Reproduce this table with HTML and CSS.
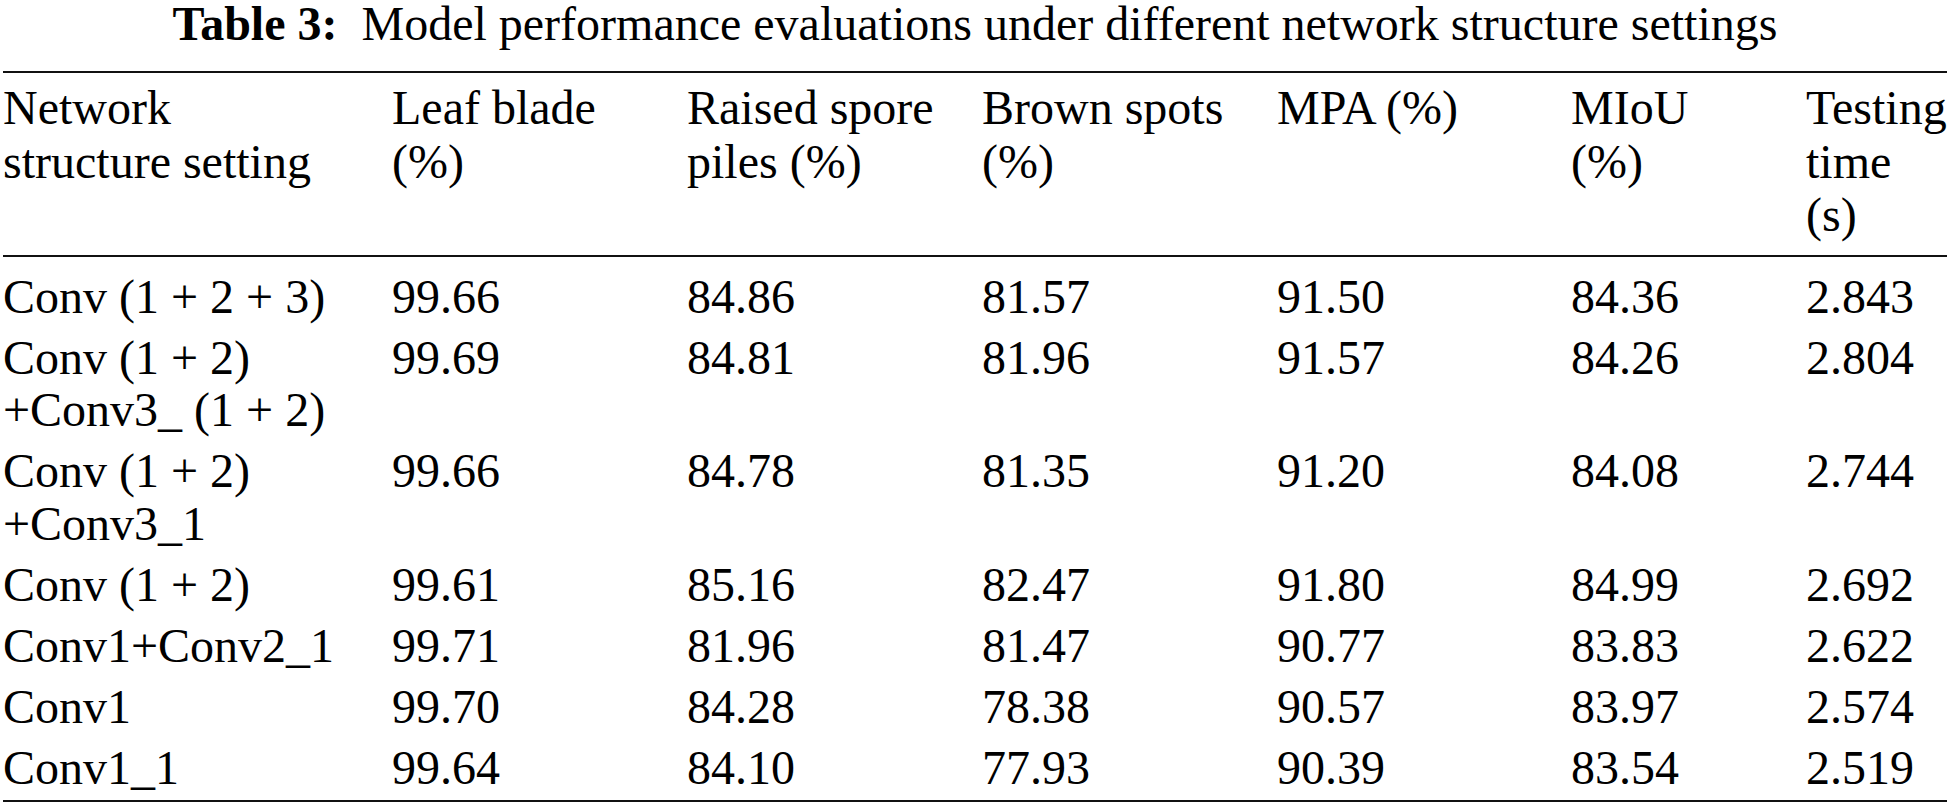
FILE: index.html
```html
<!DOCTYPE html>
<html lang="en">
<head>
<meta charset="utf-8">
<title>Table 3</title>
<link rel="stylesheet" href="styles.css">
</head>
<body>
<div class="page">
  <p class="caption"><b class="label">Table 3:</b>&nbsp; Model performance evaluations under different network structure settings</p>
  <table class="data">
    <colgroup>
      <col class="c1"><col class="c2"><col class="c3"><col class="c4"><col class="c5"><col class="c6"><col class="c7">
    </colgroup>
    <thead>
      <tr>
        <th>Network<br>structure setting</th>
        <th>Leaf blade<br>(%)</th>
        <th>Raised spore<br>piles (%)</th>
        <th>Brown spots<br>(%)</th>
        <th>MPA (%)</th>
        <th>MIoU<br>(%)</th>
        <th>Testing<br>time<br>(s)</th>
      </tr>
    </thead>
    <tbody>
      <tr class="first">
        <td>Conv (1 + 2 + 3)</td><td>99.66</td><td>84.86</td><td>81.57</td><td>91.50</td><td>84.36</td><td>2.843</td>
      </tr>
      <tr>
        <td>Conv (1 + 2)<br>+Conv3_ (1 + 2)</td><td>99.69</td><td>84.81</td><td>81.96</td><td>91.57</td><td>84.26</td><td>2.804</td>
      </tr>
      <tr>
        <td>Conv (1 + 2)<br>+Conv3_1</td><td>99.66</td><td>84.78</td><td>81.35</td><td>91.20</td><td>84.08</td><td>2.744</td>
      </tr>
      <tr>
        <td>Conv (1 + 2)</td><td>99.61</td><td>85.16</td><td>82.47</td><td>91.80</td><td>84.99</td><td>2.692</td>
      </tr>
      <tr>
        <td>Conv1+Conv2_1</td><td>99.71</td><td>81.96</td><td>81.47</td><td>90.77</td><td>83.83</td><td>2.622</td>
      </tr>
      <tr>
        <td>Conv1</td><td>99.70</td><td>84.28</td><td>78.38</td><td>90.57</td><td>83.97</td><td>2.574</td>
      </tr>
      <tr class="last">
        <td>Conv1_1</td><td>99.64</td><td>84.10</td><td>77.93</td><td>90.39</td><td>83.54</td><td>2.519</td>
      </tr>
    </tbody>
  </table>
</div>
</body>
</html>
```
FILE: styles.css
```css
html, body {
  margin: 0;
  padding: 0;
  background: #ffffff;
}

body {
  font-family: "Liberation Serif", "Times New Roman", serif;
  color: #000000;
}

.page {
  width: 1950px;
  height: 806px;
  overflow: hidden;
}

.caption {
  margin: 0 0 23px 0;
  text-align: center;
  font-size: 48px;
  line-height: 48px;
  white-space: nowrap;
}

.caption .label {
  font-weight: bold;
}

.data {
  margin-left: 3px;
  width: 1944px;
  table-layout: fixed;
  border-collapse: separate;
  border-spacing: 0;
  border-top: 2px solid #111111;
  border-bottom: 2px solid #111111;
  font-size: 48px;
}

.c1 { width: 389px; }
.c2 { width: 295px; }
.c3 { width: 295px; }
.c4 { width: 295px; }
.c5 { width: 294px; }
.c6 { width: 235px; }
.c7 { width: 141px; }

.data th,
.data td {
  text-align: left;
  vertical-align: top;
  white-space: nowrap;
  padding-left: 0;
  padding-right: 0;
  font-weight: normal;
}

.data th {
  line-height: 53.5px;
  padding-top: 8px;
  padding-bottom: 13px;
  border-bottom: 2px solid #111111;
}

.data td {
  line-height: 52.5px;
  padding-top: 4.25px;
  padding-bottom: 4.25px;
}

.data tr.first td {
  padding-top: 14px;
}

.data tr.last td {
  padding-bottom: 6px;
}
```
